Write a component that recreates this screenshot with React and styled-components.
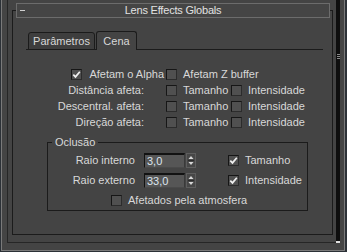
import React from "react";
import styled, { createGlobalStyle } from "styled-components";

const GlobalStyle = createGlobalStyle`
  * { box-sizing: border-box; }
  html, body { margin: 0; padding: 0; background: #2c3137; }
  body {
    font-family: "Liberation Sans", Arial, sans-serif;
    font-size: 11px;
    color: #d8d8d8;
  }
`;

const Window = styled.div`
  width: 347px;
  height: 252px;
  background: #2c3137;
  padding: 0 2px 1px 1px;
  display: flex;
`;

const Panel = styled.div`
  flex: 1;
  display: flex;
  align-items: flex-start;
  background: #444444;
  border-left: 1px solid #7a7a7a;
  border-right: 1px solid #7a7a7a;
  border-bottom: 1px solid #7a7a7a;
  padding: 0 4px 0 5px;
`;

const OuterFrame = styled.div`
  flex: 1;
  align-self: stretch;
  margin-bottom: 7px;
  display: flex;
  flex-direction: column;
  border-left: 1px solid #262626;
  border-bottom: 1px solid #262626;
  padding: 10px 3px 7px 4px;
`;

const ScrollStrip = styled.div`
  width: 4px;
  height: 243px;
  background: #0e0e0e;
  display: flex;
  flex-direction: column;
  align-items: center;
  padding-top: 54px;
`;

const Grip = styled.span`
  width: 3px;
  height: 1px;
  margin-bottom: 1px;
  background: #8a8a8a;
`;

const ScrollEnd = styled.span`
  margin-top: auto;
  margin-bottom: 0;
  width: 4px;
  height: 2px;
  background: #e0e0e0;
`;

const Rollout = styled.div`
  flex: 1;
  display: flex;
  flex-direction: column;
  border: 1px solid #1b1b1b;
`;

const Header = styled.div`
  margin: -8px 2px 0 3px;
  height: 15px;
  border: 1px solid #6c6c6c;
  background: #454545;
  display: grid;
  grid-template-columns: 24px 1fr 24px;
  align-items: center;
  color: #e2e2e2;
`;

const Minus = styled.span`
  width: 5px;
  height: 1px;
  margin-left: 3px;
  background: #d0d0d0;
`;

const Title = styled.span`
  text-align: center;
  letter-spacing: -0.2px;
  line-height: 13px;
`;

const TabArea = styled.div`
  margin: 13px 9px 0 13px;
  display: flex;
  flex-direction: column;
`;

const TabBar = styled.div`
  height: 19px;
  display: flex;
  align-items: flex-end;
  padding-left: 2px;
  border-bottom: 1px solid #1b1b1b;
`;

const Tab = styled.div`
  width: ${(p) => p.$w}px;
  height: ${(p) => (p.$active ? 19 : 18)}px;
  margin-bottom: -1px;
  margin-right: 1px;
  border: 1px solid #1b1b1b;
  border-bottom: ${(p) => (p.$active ? "none" : "1px solid #1b1b1b")};
  border-radius: 3px 3px 0 0;
  background: ${(p) => (p.$active ? "#444444" : "#3e3e3e")};
  display: flex;
  align-items: center;
  justify-content: center;
  padding-top: ${(p) => (p.$active ? 0 : 1)}px;
  line-height: 13px;
`;

const TabBody = styled.div`
  display: flex;
  flex-direction: column;
  padding-top: 16px;
`;

const Row = styled.div`
  height: 16px;
  display: flex;
  align-items: center;
`;

const Lead = styled.div`
  width: 140px;
  display: flex;
  justify-content: flex-end;
  align-items: center;
  gap: 7px;
  padding-right: ${(p) => p.$pad}px;
  white-space: nowrap;
`;

const Item = styled.div`
  display: flex;
  align-items: center;
  gap: 6px;
  width: ${(p) => (p.$w ? `${p.$w}px` : "auto")};
  margin-left: ${(p) => p.$ml || 0}px;
  white-space: nowrap;
`;

const Box = styled.span`
  width: 11px;
  height: 11px;
  flex: none;
  display: flex;
  align-items: center;
  justify-content: center;
  background: #505050;
  border-top: 1px solid #161616;
  border-left: 1px solid #161616;
  border-right: 1px solid #2c2c2c;
  border-bottom: 1px solid #2c2c2c;
`;

const Group = styled.fieldset`
  margin: 6px 15px 0 21px;
  padding: 1px 0 0 0;
  min-width: 0;
  border: 1px solid #1b1b1b;
`;

const Legend = styled.legend`
  margin-left: 4px;
  padding: 0 3px;
  line-height: 13px;
`;

const GroupRow = styled.div`
  height: 20px;
  display: flex;
  align-items: center;
`;

const FieldLabel = styled.span`
  width: 87px;
  text-align: right;
  white-space: nowrap;
`;

const Field = styled.div`
  width: 41px;
  height: 15px;
  margin-left: 9px;
  background: #565656;
  border-top: 2px solid #121212;
  border-left: 1px solid #121212;
  border-right: 1px solid #3a3a3a;
  border-bottom: 1px solid #4a4a4a;
  padding-left: 2px;
  line-height: 12px;
  color: #dce4ee;
`;

const SpinWrap = styled.span`
  margin-left: 1px;
  width: 10px;
  height: 15px;
  display: flex;
`;

function Check({ on }) {
  return (
    <Box>
      {on && (
        <svg width="9" height="9" viewBox="0 0 9 9">
          <path d="M1.3 4.6 L3.5 6.9 L7.8 1.8" fill="none" stroke="#f0f0f0" strokeWidth="1.7" />
        </svg>
      )}
    </Box>
  );
}

function Spinner() {
  return (
    <SpinWrap>
      <svg width="10" height="15" viewBox="0 0 10 15">
        <rect x="0.5" y="0.5" width="9" height="14" fill="#474747" stroke="#5e5e5e" />
        <path d="M5 3 L7.5 6 L2.5 6 Z" fill="#d8d8d8" />
        <path d="M2 7.5 L8 7.5" stroke="#2a2a2a" strokeWidth="1" />
        <path d="M5 12 L7.5 9 L2.5 9 Z" fill="#d8d8d8" />
      </svg>
    </SpinWrap>
  );
}

const affects = ["Distância afeta:", "Descentral. afeta:", "Direção afeta:"];

export default function App() {
  return (
    <>
      <GlobalStyle />
      <Window>
        <Panel>
          <OuterFrame>
            <Rollout>
              <Header>
                <Minus />
                <Title>Lens Effects Globals</Title>
                <span />
              </Header>
              <TabArea>
                <TabBar>
                  <Tab $w={67}>Parâmetros</Tab>
                  <Tab $w={41} $active>Cena</Tab>
                </TabBar>
                <TabBody>
                  <Row>
                    <Lead $pad={2}>
                      <Check on />
                      <span>Afetam o Alpha</span>
                    </Lead>
                    <Item>
                      <Check />
                      <span>Afetam Z buffer</span>
                    </Item>
                  </Row>
                  {affects.map((label) => (
                    <Row key={label}>
                      <Lead $pad={22}>{label}</Lead>
                      <Item $w={65}>
                        <Check />
                        <span>Tamanho</span>
                      </Item>
                      <Item>
                        <Check />
                        <span>Intensidade</span>
                      </Item>
                    </Row>
                  ))}
                  <Group>
                    <Legend>Oclusão</Legend>
                    <GroupRow>
                      <FieldLabel>Raio interno</FieldLabel>
                      <Field>3,0</Field>
                      <Spinner />
                      <Item $ml={32}>
                        <Check on />
                        <span>Tamanho</span>
                      </Item>
                    </GroupRow>
                    <GroupRow>
                      <FieldLabel>Raio externo</FieldLabel>
                      <Field>33,0</Field>
                      <Spinner />
                      <Item $ml={32}>
                        <Check on />
                        <span>Intensidade</span>
                      </Item>
                    </GroupRow>
                    <GroupRow>
                      <Item $ml={63}>
                        <Check />
                        <span>Afetados pela atmosfera</span>
                      </Item>
                    </GroupRow>
                  </Group>
                </TabBody>
              </TabArea>
            </Rollout>
          </OuterFrame>
          <ScrollStrip>
            <Grip />
            <Grip />
            <Grip />
            <ScrollEnd />
          </ScrollStrip>
        </Panel>
      </Window>
    </>
  );
}
